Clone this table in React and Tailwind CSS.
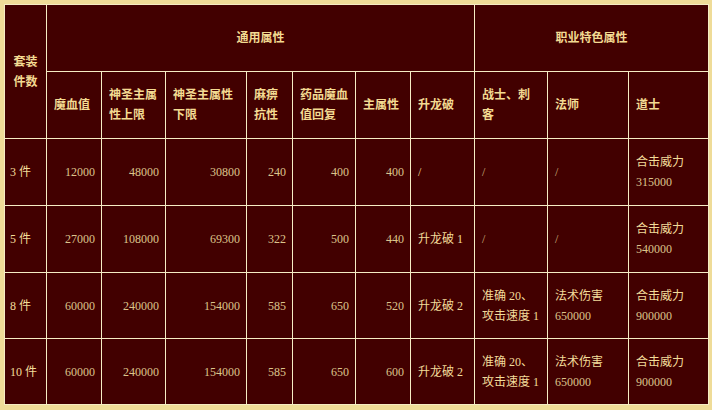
const rows = [
  { n: '3 件', v: ['12000', '48000', '30800', '240', '400', '400'], lb: '/', zs: null, fs: null, ds: '315000' },
  { n: '5 件', v: ['27000', '108000', '69300', '322', '500', '440'], lb: '升龙破 1', zs: null, fs: null, ds: '540000' },
  { n: '8 件', v: ['60000', '240000', '154000', '585', '650', '520'], lb: '升龙破 2', zs: true, fs: '650000', ds: '900000' },
  { n: '10 件', v: ['60000', '240000', '154000', '585', '650', '600'], lb: '升龙破 2', zs: true, fs: '650000', ds: '900000' },
]

const widths = [42, 55, 64, 81, 46, 63, 55, 64, 73, 81, 80]

const th = 'border border-[#f6ecc4] font-bold text-[#f3da92] align-middle'
const td = 'border border-[#f6ecc4] px-[7px] align-middle'

export default function App() {
  return (
    <div
      className="w-[712px] h-[410px] bg-[#efdc98] pt-[4px] pl-[4px] pr-[3px] pb-[5px] text-[12px] leading-[20px]"
      style={{ fontFamily: '"Liberation Serif", "Noto Sans CJK SC", serif' }}
    >
      <table className="w-[705px] h-[401px] table-fixed border-collapse bg-[#420000]">
        <colgroup>
          {widths.map((w, i) => (
            <col key={i} style={{ width: w }} />
          ))}
        </colgroup>
        <thead>
          <tr className="h-[67px]">
            <th rowSpan={2} className={th + ' text-center'}>
              套装<br />件数
            </th>
            <th colSpan={7} className={th + ' text-center'}>通用属性</th>
            <th colSpan={3} className={th + ' text-center'}>职业特色属性</th>
          </tr>
          <tr className="h-[67px]">
            <th className={th + ' text-left px-[7px]'}>魔血值</th>
            <th className={th + ' text-left px-[7px]'}>神圣主属<br />性上限</th>
            <th className={th + ' text-left px-[7px]'}>神圣主属性<br />下限</th>
            <th className={th + ' text-left px-[7px]'}>麻痹<br />抗性</th>
            <th className={th + ' text-left px-[7px]'}>药品魔血<br />值回复</th>
            <th className={th + ' text-left px-[7px]'}>主属性</th>
            <th className={th + ' text-left px-[7px]'}>升龙破</th>
            <th className={th + ' text-left px-[7px]'}>战士、刺<br />客</th>
            <th className={th + ' text-left px-[7px]'}>法师</th>
            <th className={th + ' text-left px-[7px]'}>道士</th>
          </tr>
        </thead>
        <tbody>
          {rows.map((r, i) => (
            <tr key={r.n} className={i < 2 ? 'h-[67px]' : 'h-[66px]'}>
              <td className={td + ' text-[#f2dc9a] pl-[5px]'}>{r.n}</td>
              {r.v.map((x, j) => (
                <td key={j} className={td + ' text-right pr-[6px] text-[#dcc48c]'}>{x}</td>
              ))}
              <td className={td + ' text-[#f2dc9a]'}>{r.lb}</td>
              <td className={td + ' text-[#f2dc9a]'}>
                {r.zs ? (
                  <>准确 20、<br />攻击速度 1</>
                ) : (
                  <span className="text-[#cdb27c]">/</span>
                )}
              </td>
              <td className={td}>
                {r.fs ? (
                  <>
                    <div className="text-[#f2dc9a]">法术伤害</div>
                    <div className="text-[#dcc48c]">{r.fs}</div>
                  </>
                ) : (
                  <span className="text-[#cdb27c]">/</span>
                )}
              </td>
              <td className={td}>
                <div className="text-[#f2dc9a]">合击威力</div>
                <div className="text-[#dcc48c]">{r.ds}</div>
              </td>
            </tr>
          ))}
        </tbody>
      </table>
    </div>
  )
}
